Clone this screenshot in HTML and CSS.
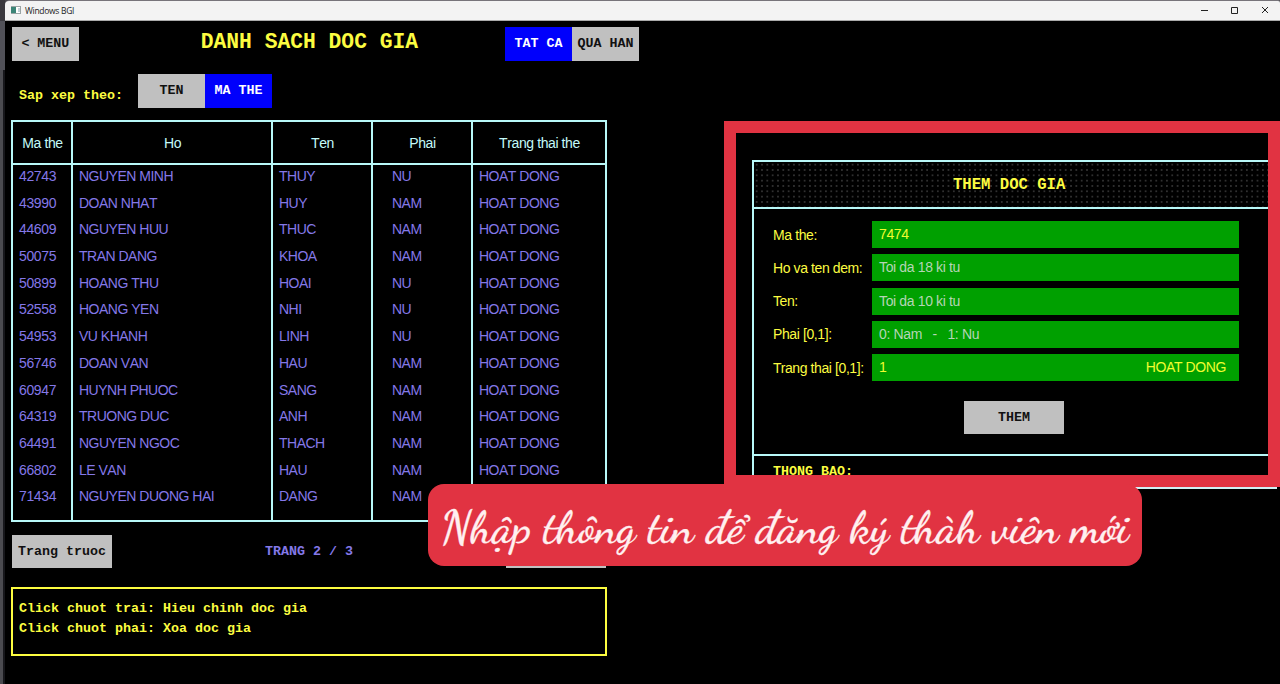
FILE: index.html
```html
<!DOCTYPE html>
<html lang="vi">
<head>
<meta charset="utf-8">
<title>Windows BGI</title>
<link rel="stylesheet" href="styles.css">
</head>
<body>
<div class="desktop">
  <div class="edge"></div>
  <div class="window">
    <header class="titlebar">
      <svg class="app-icon" width="10" height="8" viewBox="0 0 10 8"><rect x=".5" y=".5" width="9" height="7" fill="#fff" stroke="#9aa5a5"/><rect x="0" y="1" width="5" height="6" fill="#3c8577"/><rect x="7" y="2" width="2" height="4" fill="#c4d3d8"/></svg>
      <span class="app-name">Windows BGI</span>
      <svg class="controls" width="72" height="12" viewBox="0 0 72 12" fill="none" stroke="#222" stroke-width="1"><path d="M1 6.5h7M31.5 3.5h6v6h-6zM62 3l6 6M68 3l-6 6"/></svg>
    </header>
    <main class="screen">
      <section class="list">
        <div class="top">
          <button class="btn small">&lt; MENU</button>
          <h1>DANH SACH DOC GIA</h1>
          <div class="tabs"><button class="btn small on">TAT CA</button><button class="btn small">QUA HAN</button></div>
        </div>
        <div class="sort">
          <span class="sort-label">Sap xep theo:</span>
          <div class="tabs"><button class="btn small">TEN</button><button class="btn small on">MA THE</button></div>
        </div>
        <div class="grid">
          <div class="col"><div class="th">Ma the</div><div class="cells num"><p>42743</p><p>43990</p><p>44609</p><p>50075</p><p>50899</p><p>52558</p><p>54953</p><p>56746</p><p>60947</p><p>64319</p><p>64491</p><p>66802</p><p>71434</p></div></div>
          <div class="col"><div class="th">Ho</div><div class="cells"><p>NGUYEN MINH</p><p>DOAN NHAT</p><p>NGUYEN HUU</p><p>TRAN DANG</p><p>HOANG THU</p><p>HOANG YEN</p><p>VU KHANH</p><p>DOAN VAN</p><p>HUYNH PHUOC</p><p>TRUONG DUC</p><p>NGUYEN NGOC</p><p>LE VAN</p><p>NGUYEN DUONG HAI</p></div></div>
          <div class="col"><div class="th">Ten</div><div class="cells"><p>THUY</p><p>HUY</p><p>THUC</p><p>KHOA</p><p>HOAI</p><p>NHI</p><p>LINH</p><p>HAU</p><p>SANG</p><p>ANH</p><p>THACH</p><p>HAU</p><p>DANG</p></div></div>
          <div class="col"><div class="th">Phai</div><div class="cells sex"><p>NU</p><p>NAM</p><p>NAM</p><p>NAM</p><p>NU</p><p>NU</p><p>NU</p><p>NAM</p><p>NAM</p><p>NAM</p><p>NAM</p><p>NAM</p><p>NAM</p></div></div>
          <div class="col"><div class="th">Trang thai the</div><div class="cells"><p>HOAT DONG</p><p>HOAT DONG</p><p>HOAT DONG</p><p>HOAT DONG</p><p>HOAT DONG</p><p>HOAT DONG</p><p>HOAT DONG</p><p>HOAT DONG</p><p>HOAT DONG</p><p>HOAT DONG</p><p>HOAT DONG</p><p>HOAT DONG</p></div></div>
        </div>
        <div class="pager"><button class="btn">Trang truoc</button><span>TRANG 2 / 3</span><button class="btn"></button></div>
        <div class="help"><p>Click chuot trai: Hieu chinh doc gia</p><p>Click chuot phai: Xoa doc gia</p></div>
      </section>
      <aside class="highlight">
        <div class="panel">
          <h2>THEM DOC GIA</h2>
          <div class="form">
            <label>Ma the:</label><div class="field value">7474</div>
            <label>Ho va ten dem:</label><div class="field">Toi da 18 ki tu</div>
            <label>Ten:</label><div class="field">Toi da 10 ki tu</div>
            <label>Phai [0,1]:</label><div class="field pre">0: Nam   -   1: Nu</div>
            <label>Trang thai [0,1]:</label><div class="field value"><span>1</span><span>HOAT DONG</span></div>
          </div>
          <button class="btn submit">THEM</button>
          <div class="notice">THONG BAO:</div>
        </div>
      </aside>
      <div class="panel-end"></div>
      <div class="caption"><svg width="714" height="82" viewBox="0 0 714 82"><text x="13" y="58" textLength="688" lengthAdjust="spacingAndGlyphs">Nhập thông tin để đăng ký thàh viên mới</text></svg></div>
    </main>
  </div>
</div>
</body>
</html>
```
FILE: styles.css
```css
* { box-sizing: border-box; }
body { margin: 0; background: #000; overflow: hidden; }
p, h1, h2 { margin: 0; }
.desktop { display: flex; width: 1280px; height: 684px; background: #4a494e; }
.edge { width: 5px; background: linear-gradient(90deg, transparent 3px, #17171b 3px) 0 70px no-repeat, linear-gradient(#3a393e 0 21px, #515158 21px 70px, #4b4b50 70px); }
.window { display: flex; flex-direction: column; width: 1275px; padding-top: 1px; background: #77747a; border-radius: 5px 2px 0 0; }
.titlebar { display: flex; align-items: center; height: 20px; padding: 0 8px 1px 6px; background: #f3f3f3; border-bottom: 1px solid #aaa; border-radius: 4px 2px 0 0; font: 8.5px "Open Sans", "Noto Sans", sans-serif; letter-spacing: -.3px; color: #222; }
.app-name { margin-left: 4px; }
.controls { margin-left: auto; }
.screen { position: relative; flex: 1; display: flex; align-items: flex-start; justify-content: space-between; background: #000; overflow: hidden; }
.list { width: 634px; padding: 6px 0 0 6px; }
.btn { width: 100px; height: 33px; padding: 0 0 1px; border: 0; border-radius: 0; background: #c0c0c0; color: #111; font: bold 13.33px "Liberation Mono", monospace; white-space: nowrap; }
.btn.small { width: 67px; height: 34px; }
.btn.on { background: #0000fc; color: #fff; }
.tabs { display: flex; }
.top { display: flex; align-items: flex-start; margin-left: 1px; }
h1 { width: 220px; margin: 2px 85px 0 122px; font: bold 21.3px/26px "Liberation Mono", monospace; color: #fcfc40; white-space: nowrap; }
.sort { display: flex; align-items: center; margin-top: 13px; }
.sort-label { width: 127px; padding: 8px 0 0 8px; font: bold 13.33px "Liberation Mono", monospace; color: #fcfc40; white-space: nowrap; }
.grid { display: grid; grid-template-columns: 60px 200px 100px 100px 134px; width: 596px; height: 402px; margin-top: 12px; border: 2px solid #b8f8f8; border-left: 0; color: #8478e8; font: 14px "Liberation Sans", sans-serif; font-kerning: none; }
.col { border-left: 2px solid #b8f8f8; min-width: 0; }
.th { display: flex; align-items: center; justify-content: center; height: 43px; padding-left: 1px; border-bottom: 2px solid #b8f8f8; color: #c4fafa; letter-spacing: -.4px; white-space: nowrap; }
.cells { padding-left: 6px; letter-spacing: -.5px; white-space: nowrap; }
.cells p { height: 26.7px; line-height: 22.6px; }
.num { letter-spacing: -.35px; }
.sex { padding-left: 19px; }
.pager { display: flex; align-items: center; justify-content: space-between; width: 594px; margin: 13px 0 0 1px; color: #8478e8; font: bold 13.33px "Liberation Mono", monospace; }
.help { width: 596px; height: 69px; margin-top: 19px; padding: 10px 6px; border: 2px solid #fcfc40; color: #fcfc40; font: bold 13.33px/20px "Liberation Mono", monospace; }
.highlight { width: 556px; height: 366px; margin-top: 100px; padding: 27px 0 0 16px; border: 12px solid #e13342; overflow: hidden; }
.panel { width: 530px; height: 330px; border: 2px solid #b8f8f8; }
h2 { height: 47px; padding-left: 199px; border-bottom: 2px solid #b8f8f8; background: #000 radial-gradient(circle, #303030 .8px, #000 1px) 0 0 / 5.33px 5.33px; color: #fcfc40; font: bold 15.6px/46px "Liberation Mono", monospace; }
.form { display: grid; grid-template-columns: 99px 367px; grid-auto-rows: 27px; row-gap: 6.3px; margin: 12px 0 0 19px; align-items: center; color: #fcfc40; font: 14px/26px "Liberation Sans", sans-serif; white-space: nowrap; letter-spacing: -.4px; }
.field { display: flex; justify-content: space-between; height: 27px; padding: 0 13px 0 7px; background: #00a000; color: #b5d5b5; line-height: 27px; letter-spacing: -.36px; }
.value { color: #f0fc30; letter-spacing: -.35px; }
.pre { white-space: pre; }
.submit { display: block; margin: 20px 0 0 210px; }
.notice { margin-top: 20px; padding: 8px 19px; border-top: 2px solid #b8f8f8; color: #fcfc40; font: bold 13.33px/15px "Liberation Mono", monospace; }
.panel-end { position: absolute; left: 1130px; top: 466px; width: 142px; height: 2px; background: #d0f0f4; }
.caption { position: absolute; left: 423px; top: 463px; width: 714px; height: 82px; border-radius: 16px; background: #e13342; }
.caption text { fill: #fff0f0; stroke: #fff0f0; stroke-width: .3px; font: 500 46px "Dancing Script", "Liberation Serif", cursive; }
```
